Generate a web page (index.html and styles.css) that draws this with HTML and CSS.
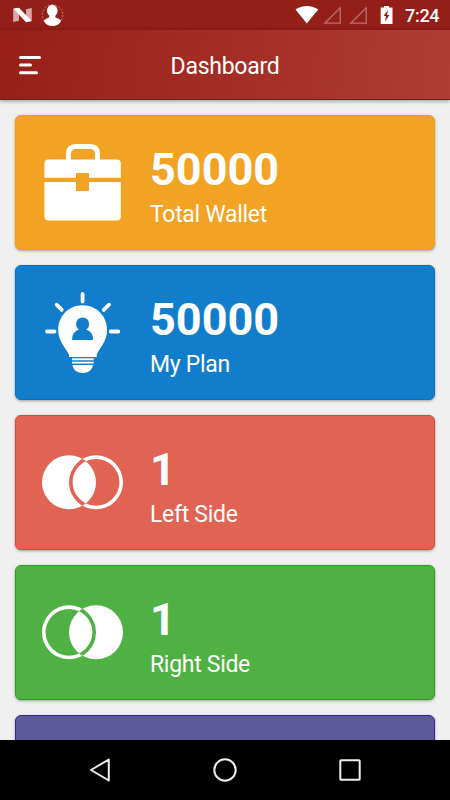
FILE: index.html
```html
<!DOCTYPE html>
<html lang="en">
<head>
    <meta charset="UTF-8">
    <meta name="viewport" content="width=device-width, initial-scale=1.0">
    <title>Dashboard</title>
    <link rel="stylesheet" href="styles.css">
</head>
<body>
    <div class="status-bar">
        <svg class="status-left" width="70" height="30" viewBox="0 0 70 30">
            <path d="M13.200 9l5.800-1v12.800l-5.800 1.200zM26 9.200l5.800-1.200v13l-5.800 1z" fill="#fff" opacity=".62"/>
            <path d="M13.400 8.600L19 7.800 31.600 21 26 22.300z" fill="#fff"/>
            <circle cx="52.500" cy="15" r="10.300" fill="none" stroke="#fff" stroke-width=".8" stroke-dasharray="2 1.600" opacity=".5"/>
            <ellipse cx="52.300" cy="10.800" rx="5.300" ry="6" fill="#fff"/>
            <path d="M49.200 14h6.200v3.600c2.200.8 4.800 1.500 5.800 3.400-1.500 3-4.800 5-8.700 5s-7.400-2-8.900-5c1.300-1.900 3.700-2.600 5.600-3.400z" fill="#fff"/>
        </svg>
        <svg class="status-right" width="110" height="30" viewBox="290 0 110 30">
            <path d="M295.500 9.500C302 4.700 312 4.700 318.200 9.500L306.800 23.500z" fill="#fff"/>
            <path d="M340.200 7.800v15.400h-15.400zM366.200 7.800v15.400h-15.400z" fill="none" stroke="#fff" stroke-width="1.300" opacity=".36"/>
            <path d="M384 6h5v1.600h3.500v16.400h-11.800V7.600h3.300z" fill="#fff"/>
            <path d="M388 10l-4.500 6h2.500l-1 5.500 4.500-6.500h-2.500z" fill="#931f18"/>
        </svg>
        <span class="time">7:24</span>
    </div>

    <div class="header">
        <svg class="menu-icon" width="24" height="24" viewBox="18 53 24 24">
            <path d="M20.500 57.500h19M20.500 65h10M20.500 72.700h16" stroke="#fff" stroke-width="3" stroke-linecap="round"/>
        </svg>
        <div class="title">Dashboard</div>
    </div>

    <div class="content">
        <div class="card wallet">
            <svg class="card-icon" viewBox="37 22 90 90">
                <path d="M68.500 46v-7q0-7.500 7.500-7.500h14q7.500 0 7.500 7.500v7" fill="none" stroke="#fff" stroke-width="5"/>
                <path d="M44.400 62.700V48.500q0-4 4-4h68.400q4 0 4 4v14.200H89V58H76v4.700zM44.400 67H76v9h13v-9h31.800v34.500q0 4-4 4H48.400q-4 0-4-4z" fill="#fff"/>
            </svg>
            <div class="card-text">
                <div class="value">50000</div>
                <div class="label">Total Wallet</div>
            </div>
        </div>

        <div class="card plan">
            <svg class="card-icon" viewBox="37 22 90 90">
                <path d="M82.600 29v7.500M47 66.500h7.500M110.800 66.500h7.500M56.700 39.700l5 5.200M109 39.700l-5.200 5.200" stroke="#fff" stroke-width="3.800" stroke-linecap="round"/>
                <path d="M82.600 40.300c-14 0-24.400 11-24.400 24.700 0 12 7.500 17 10.800 25v1.900h27.700V90c3-8 10.400-13 10.400-25 0-13.700-10.500-24.700-24.500-24.700z" fill="#fff"/>
                <path d="M72 93.300h21.700v2H72zM72 96.800h21.700v1.700H72zM72.500 100h20.500c-.5 5-5 8-10.200 8s-9.800-3-10.300-8z" fill="#fff"/>
                <circle cx="82.600" cy="59" r="6.600" fill="#127ecb"/>
                <path d="M79 63h7.200v1.500c4.500 1.500 6.800 4.500 6.900 10.500H72.100c.1-6 2.400-9 6.900-10.500z" fill="#127ecb"/>
            </svg>
            <div class="card-text">
                <div class="value">50000</div>
                <div class="label">My Plan</div>
            </div>
        </div>

        <div class="card left-side">
            <svg class="card-icon" viewBox="37 22 90 90">
                <path fill="#fff" fill-rule="evenodd" d="M42 67.300a27 27 0 1 0 54 0a27 27 0 1 0-54 0zM69 67.300a27 27 0 1 0 54 0a27 27 0 1 0-54 0zM72.600 67.300a23.400 23.400 0 1 0 46.800 0a23.400 23.400 0 1 0-46.800 0z"/>
            </svg>
            <div class="card-text">
                <div class="value">1</div>
                <div class="label">Left Side</div>
            </div>
        </div>

        <div class="card right-side">
            <svg class="card-icon" viewBox="37 22 90 90">
                <path fill="#fff" fill-rule="evenodd" d="M42 67.300a27 27 0 1 0 54 0a27 27 0 1 0-54 0zM69 67.300a27 27 0 1 0 54 0a27 27 0 1 0-54 0zM45.600 67.300a23.400 23.400 0 1 0 46.800 0a23.400 23.400 0 1 0-46.800 0z"/>
            </svg>
            <div class="card-text">
                <div class="value">1</div>
                <div class="label">Right Side</div>
            </div>
        </div>

        <div class="card more"></div>
    </div>

    <div class="nav-bar">
        <svg width="30" height="30" viewBox="85 755 30 30">
            <path d="M108.800 759.500v21L91 770z" fill="none" stroke="#eee" stroke-width="2" stroke-linejoin="round"/>
        </svg>
        <svg width="30" height="30" viewBox="210 755 30 30">
            <circle cx="225" cy="770" r="10.700" fill="none" stroke="#eee" stroke-width="2"/>
        </svg>
        <svg width="30" height="30" viewBox="335 755 30 30">
            <rect x="340.300" y="760.300" width="19.400" height="19.400" rx=".8" fill="none" stroke="#eee" stroke-width="2"/>
        </svg>
    </div>
</body>
</html>
```
FILE: styles.css
```css
* {
    box-sizing: border-box;
}

body {
    margin: 0;
    height: 100vh;
    display: flex;
    flex-direction: column;
    overflow: hidden;
    font-family: Roboto, sans-serif;
    background: #f0f0f0;
    color: white;
}

svg {
    display: block;
    flex: none;
}

.status-bar {
    flex: none;
    height: 30px;
    display: flex;
    align-items: center;
    background: #931f18;
}

.status-right {
    margin-left: auto;
}

.time {
    width: 50px;
    padding-left: 5px;
    padding-top: 1px;
    font-size: 18px;
    font-weight: 500;
    letter-spacing: -0.3px;
    line-height: 20px;
}

.header {
    flex: none;
    height: 70px;
    padding: 0 18px;
    display: grid;
    grid-template-columns: 24px 1fr 24px;
    align-items: center;
    background: linear-gradient(97deg, #971f17 0%, #b03c34 100%);
    border-bottom: 1px solid #970b08;
    box-shadow: 0 1px 4px rgba(0,0,0,0.4);
    z-index: 1;
}

.title {
    padding-top: 4px;
    text-align: center;
    font-size: 23px;
    letter-spacing: -0.27px;
    line-height: 28px;
}

.content {
    flex: 1;
    min-height: 0;
    overflow: hidden;
    padding: 15px 15px 0;
    display: flex;
    flex-direction: column;
    gap: 15px;
}

.card {
    flex: none;
    height: 135px;
    display: flex;
    padding: 21px 0 0 21px;
    border: 1px solid;
    border-radius: 6px;
    box-shadow: 0 1px 3px rgba(0,0,0,0.35);
}

.card-icon {
    width: 90px;
    height: 90px;
}

.card-text {
    margin-left: 23px;
    padding-top: 6px;
}

.value {
    font-size: 45px;
    font-weight: bold;
    line-height: 53px;
}

.label {
    margin-top: 5px;
    font-size: 23px;
    letter-spacing: -0.3px;
    line-height: 28px;
}

.wallet {
    background: #f2a324;
    border-color: #f19f16;
}

.plan {
    background: #127ecb;
    border-color: #0670c4;
}

.left-side {
    background: #e16353;
    border-color: #d34832;
}

.right-side {
    background: #4fb143;
    border-color: #26a016;
}

.more {
    background: #5e599a;
    border-color: #36288c;
}

.nav-bar {
    flex: none;
    height: 60px;
    display: flex;
    align-items: center;
    justify-content: center;
    gap: 95px;
    background: #000;
}
```
